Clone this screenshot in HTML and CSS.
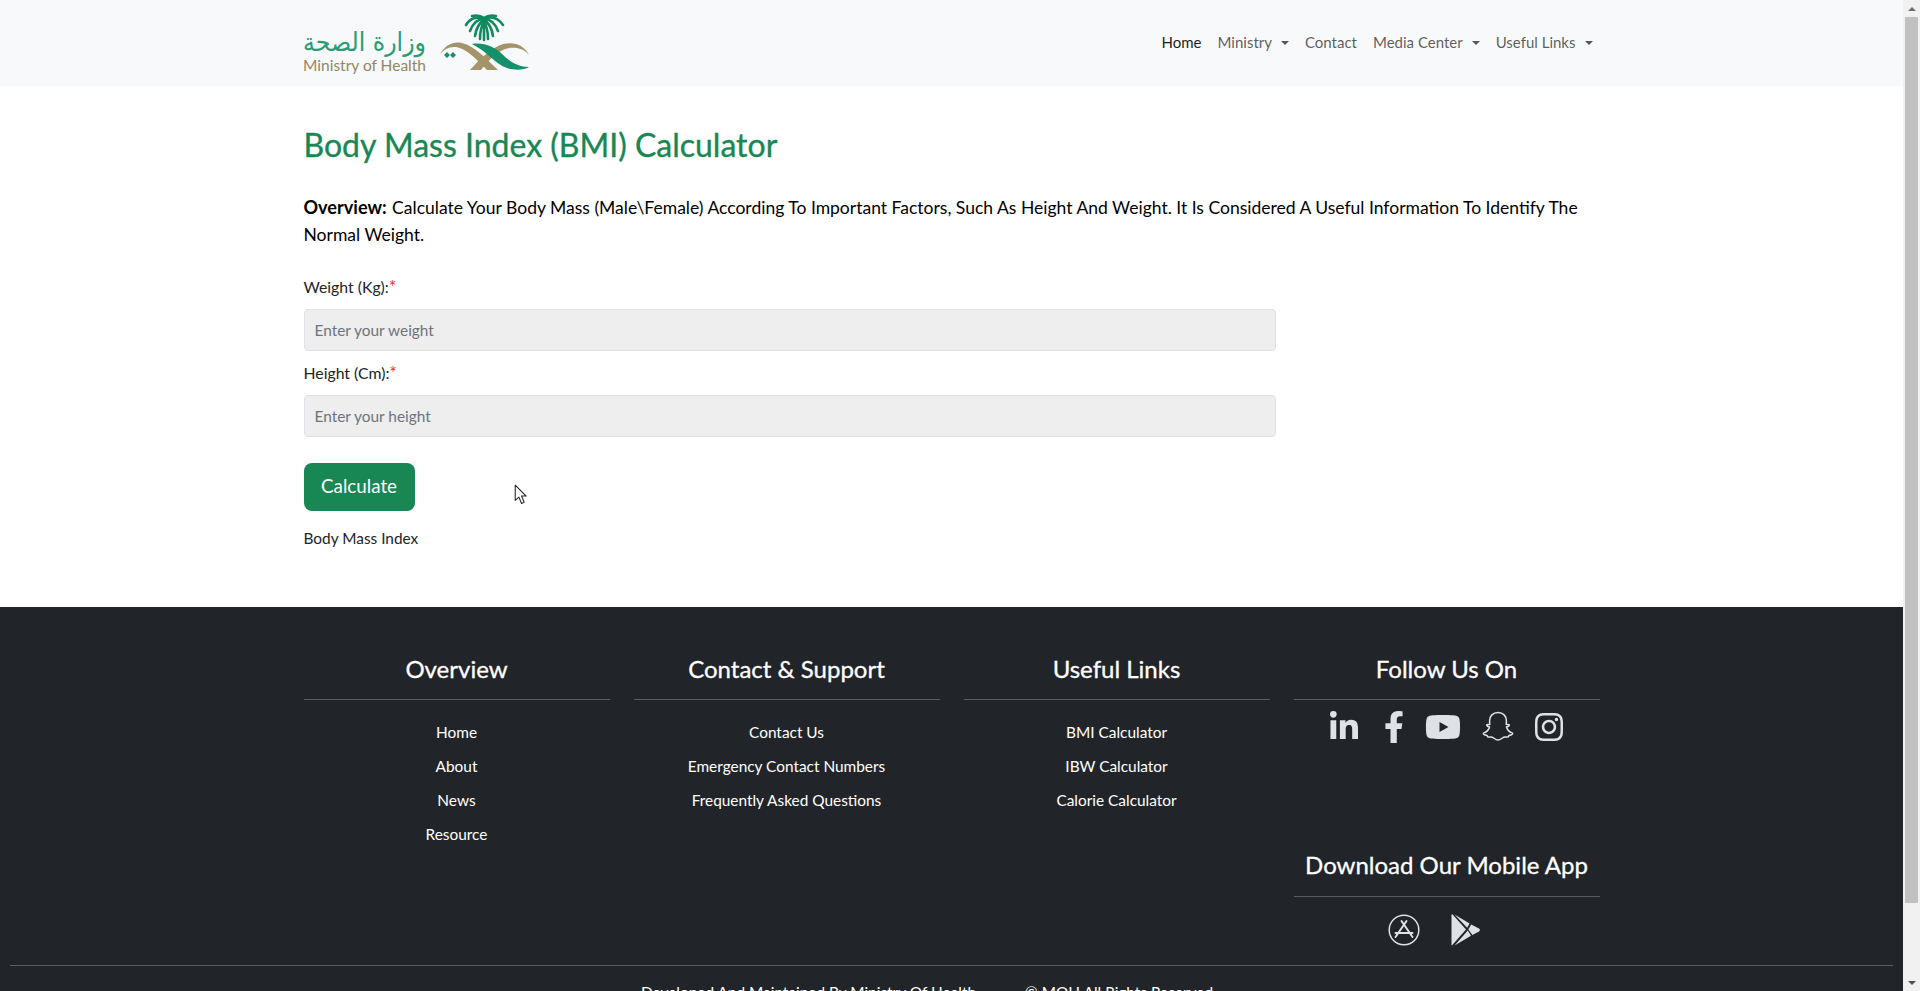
FILE: index.html
```html
<!DOCTYPE html>
<html lang="en">
<head>
<meta charset="utf-8">
<title>Body Mass Index (BMI) Calculator</title>
<link rel="stylesheet" href="styles.css">
</head>
<body>
<div class="shell">
  <div class="page">
    <nav class="navbar">
      <div class="container nav-inner">
        <a class="logo" href="#">
          <svg class="logo-svg" viewBox="300 10 232 64" width="232" height="64">
            <text class="logo-ar" x="426" y="50" text-anchor="end" textLength="123" lengthAdjust="spacingAndGlyphs">وزارة الصحة</text>
            <text class="logo-en" x="303" y="69.5" textLength="123" lengthAdjust="spacingAndGlyphs">Ministry of Health</text>
            <g class="palm">
              <path d="M484 18C477 15 470 17 466 24"/><path d="M484 18C478 18 473 22 470 30"/><path d="M484 19C480 21 476 27 475 35"/><path d="M484 20C482 24 480 30 480 38"/><path d="M484 20V39"/><path d="M484 20C486 24 488 30 488 38"/><path d="M484 19C488 21 492 27 493 35"/><path d="M484 18C490 18 495 22 498 30"/><path d="M484 18C491 15 498 17 503 24"/><path d="M484 17C480 14 476 14 472 15"/><path d="M484 17C488 14 492 14 496 15"/>
            </g>
            <path class="tan" d="M440 54C444 44 454 40 462 42C475 45 486 58 498 69H487C478 60 468 49 458 46.5C450 45 444 48 440 54Z"/>
            <path class="tan" d="M470 69C480 58 491 47 503 43C515 40 525 45 529 54C524 48 516 45.5 507 47.5C497 50 488 60 481 69Z"/>
            <path class="grn" d="M472 43C484 41 494 46 501 52C509 60 517 66 529 66C524 69 515 70 507 67C495 63 488 51 472 43Z"/>
            <path class="grn" d="M447 51l3 3-3 3-3-3zM453 51l3 3-3 3-3-3z"/>
          </svg>
        </a>
        <ul class="nav-list">
          <li class="nav-item nav-active">Home</li>
          <li class="nav-item nav-drop">Ministry</li>
          <li class="nav-item">Contact</li>
          <li class="nav-item nav-drop">Media Center</li>
          <li class="nav-item nav-drop">Useful Links</li>
        </ul>
      </div>
    </nav>

    <main class="container main">
      <h1 class="title">Body Mass Index (BMI) Calculator</h1>
      <p class="overview"><strong class="overview-lead">Overview:</strong> Calculate Your Body Mass (Male\Female) According To Important Factors, Such As Height And Weight. It Is Considered A Useful Information To Identify The Normal Weight.</p>
      <form class="form">
        <label class="label">Weight (Kg):<span class="req">*</span></label>
        <input class="input" type="text" placeholder="Enter your weight">
        <label class="label">Height (Cm):<span class="req">*</span></label>
        <input class="input" type="text" placeholder="Enter your height">
        <button class="btn" type="button">Calculate</button>
      </form>
      <p class="result">Body Mass Index</p>
    </main>

    <footer class="footer">
      <div class="container foot-grid">
        <section class="col">
          <h3 class="col-title">Overview</h3>
          <ul class="links"><li>Home</li><li>About</li><li>News</li><li>Resource</li></ul>
        </section>
        <section class="col">
          <h3 class="col-title">Contact &amp; Support</h3>
          <ul class="links"><li>Contact Us</li><li>Emergency Contact Numbers</li><li>Frequently Asked Questions</li></ul>
        </section>
        <section class="col">
          <h3 class="col-title">Useful Links</h3>
          <ul class="links"><li>BMI Calculator</li><li>IBW Calculator</li><li>Calorie Calculator</li></ul>
        </section>
        <section class="col">
          <h3 class="col-title">Follow Us On</h3>
          <div class="social">
            <svg class="ic ic-in" viewBox="0 0 448 512"><path d="M100.28 448H7.4V148.9h92.88zM53.79 108.1C24.09 108.1 0 83.5 0 53.8a53.79 53.79 0 0 1 107.58 0c0 29.7-24.1 54.3-53.79 54.3zM447.9 448h-92.68V302.4c0-34.7-.7-79.2-48.29-79.2-48.29 0-55.69 37.7-55.69 76.7V448h-92.78V148.9h89.08v40.8h1.3c12.4-23.5 42.69-48.3 87.88-48.3 94 0 111.28 61.9 111.28 142.3V448z"/></svg>
            <svg class="ic ic-fb" viewBox="0 0 320 512"><path d="M279.14 288l14.22-92.66h-88.91v-60.13c0-25.35 12.42-50.06 52.24-50.06h40.42V6.26S260.43 0 225.36 0c-73.22 0-121.08 44.38-121.08 124.72v70.62H22.89V288h81.39v224h100.17V288z"/></svg>
            <svg class="ic ic-yt" viewBox="0 0 576 512"><path d="M549.655 124.083c-6.281-23.65-24.787-42.276-48.284-48.597C458.781 64 288 64 288 64S117.22 64 74.629 75.486c-23.497 6.322-42.003 24.947-48.284 48.597-11.412 42.867-11.412 132.305-11.412 132.305s0 89.438 11.412 132.305c6.281 23.65 24.787 41.5 48.284 47.821C117.22 448 288 448 288 448s170.78 0 213.371-11.486c23.497-6.321 42.003-24.171 48.284-47.821 11.412-42.867 11.412-132.305 11.412-132.305s0-89.438-11.412-132.305zm-317.51 213.508V175.185l142.739 81.205-142.739 81.201z"/></svg>
            <svg class="ic ic-sc" viewBox="0 0 32 32"><path class="ln" d="M16 1.5c-5.2 0-8.4 3.6-8.4 8.2 0 1.4.1 2.7.2 3.6-.9.5-2.4-.3-3 .4-.5.7.4 1.5 2.7 2.3-.6 2.5-2.9 5-5.7 5.9-.7.2-.6 1 .1 1.5.9.6 2.3.9 3.2 1.1.3.9.3 1.6 1.1 1.6 1.3 0 2.6-.5 4.1.1 1.6.7 3.3 2.8 5.7 2.8s4.1-2.1 5.7-2.8c1.5-.6 2.8-.1 4.1-.1.8 0 .8-.7 1.1-1.6.9-.2 2.3-.5 3.2-1.1.7-.5.8-1.3.1-1.5-2.8-.9-5.1-3.4-5.7-5.9 2.3-.8 3.2-1.6 2.7-2.3-.6-.7-2.1.1-3-.4.1-.9.2-2.2.2-3.6 0-4.6-3.2-8.2-8.4-8.2z"/></svg>
            <svg class="ic ic-ig" viewBox="0 0 448 512"><path d="M224.1 141c-63.6 0-114.9 51.3-114.9 114.9s51.3 114.9 114.9 114.9S339 319.5 339 255.9 287.7 141 224.1 141zm0 189.6c-41.1 0-74.7-33.5-74.7-74.7s33.5-74.7 74.7-74.7 74.7 33.5 74.7 74.7-33.6 74.7-74.7 74.7zm146.4-194.3c0 14.9-12 26.8-26.8 26.8-14.9 0-26.8-12-26.8-26.8s12-26.8 26.8-26.8 26.8 12 26.8 26.8zm76.1 27.2c-1.7-35.9-9.9-67.7-36.2-93.9-26.2-26.2-58-34.4-93.9-36.2-37-2.1-147.9-2.1-184.9 0-35.8 1.7-67.6 9.9-93.9 36.1s-34.4 58-36.2 93.9c-2.1 37-2.1 147.9 0 184.9 1.7 35.9 9.9 67.7 36.2 93.9s58 34.4 93.9 36.2c37 2.1 147.9 2.1 184.9 0 35.9-1.7 67.7-9.9 93.9-36.2 26.2-26.2 34.4-58 36.2-93.9 2.1-37 2.1-147.8 0-184.8zM398.8 388c-7.8 19.6-22.9 34.7-42.6 42.6-29.5 11.7-99.5 9-132.1 9s-102.7 2.6-132.1-9c-19.6-7.8-34.7-22.9-42.6-42.6-11.7-29.5-9-99.5-9-132.1s-2.6-102.7 9-132.1c7.8-19.6 22.9-34.7 42.6-42.6 29.5-11.7 99.5-9 132.1-9s102.7-2.6 132.1 9c19.6 7.8 34.7 22.9 42.6 42.6 11.7 29.5 9 99.5 9 132.1s2.7 102.7-9 132.1z"/></svg>
          </div>
          <h3 class="col-title col-title-app">Download Our Mobile App</h3>
          <div class="apps">
            <svg class="ic ic-as" viewBox="0 0 32 32"><circle class="ln" cx="16" cy="16" r="14.8"/><path class="ln ln-b" d="M13.5 7L24.5 23M18.5 7L7.5 23M7.5 19H24.5"/></svg>
            <svg class="ic ic-gp" viewBox="0 0 30 32"><path d="M.5 1.2C.5.2 1 0 1.6.5L15 15.4.9 31.5c-.3-.1-.4-.5-.4-1z"/><path d="M3.5 0.4L18.6 9.6 16.2 13.8z"/><path d="M16.8 16.6L20 21.8 3.6 31.6z"/><path d="M20.2 10.6l7.8 4c1.2.7 1.2 2.2 0 2.9l-6.6 3.4-4.1-5.4z"/></svg>
          </div>
        </section>
      </div>
      <hr class="foot-rule">
      <p class="copy"><span>Developed And Maintained By Ministry Of Health</span><span class="copy-right">© MOH All Rights Reserved</span></p>
    </footer>
  </div>

  <div class="scrollbar">
    <span class="sb-arrow sb-up"></span>
    <span class="sb-track"><span class="sb-thumb"></span></span>
    <span class="sb-arrow sb-down"></span>
  </div>
</div>

<svg class="cursor" viewBox="0 0 13 20" width="14" height="21"><path d="M1 1V15.5L4.5 12.5L7 18.5L9.5 17.5L7 11.5H11.5Z"/></svg>
</body>
</html>
```
FILE: styles.css
```css
* { box-sizing: border-box; }
html, body { margin: 0; height: 100%; }
body {
  font-family: "Lato", "Noto Sans", sans-serif;
  font-size: 15.4px;
  line-height: 1.5;
  color: #212529;
  background: #fff;
  overflow: hidden;
  position: relative;
}
.shell { display: flex; height: 100vh; overflow: hidden; }
.page { flex: 1; min-width: 0; overflow: hidden; }
.container { width: 1320px; margin: 0 auto; padding: 0 12px; }

/* nav */
.navbar { height: 86px; background: #f8f9fa; }
.nav-inner { display: flex; align-items: center; justify-content: space-between; height: 86px; }
.logo { display: block; height: 64px; margin-left: -4px; }
.logo-svg { display: block; }
.logo-ar { font-family: "DejaVu Sans", sans-serif; font-size: 26px; fill: #2a9d74; }
.logo-en { font-family: "Lato", sans-serif; font-size: 14.5px; fill: #93875f; }
.palm path { fill: none; stroke: #0f8a5f; stroke-width: 2.6; stroke-linecap: round; }
.tan { fill: #a3946a; }
.grn { fill: #14906a; }
.nav-list { display: flex; list-style: none; margin: 0 7px 2px 0; padding: 0; gap: 16px; }
.nav-item { color: rgba(0,0,0,.65); font-size: 15px; line-height: 24px; }
.nav-active { color: rgba(0,0,0,.9); }
.nav-drop::after {
  content: "";
  display: inline-block;
  margin-left: 9px;
  vertical-align: 3px;
  border-top: 4.8px solid;
  border-left: 4.8px solid transparent;
  border-right: 4.8px solid transparent;
}

/* main */
.main { padding-top: 40px; padding-bottom: 56.6px; }
.title { margin: 0 0 30px; font-size: 32px; line-height: 38.4px; font-weight: 400; color: #198754; -webkit-text-stroke: .35px #198754; }
.overview { margin: 0 0 27px; font-size: 17.52px; line-height: 27px; color: #000; }
.overview-lead { font-size: 18.1px; font-weight: 700; margin-right: 1px; }
.form { display: flex; flex-direction: column; align-items: flex-start; }
.label { font-size: 15.8px; line-height: 24px; margin-bottom: 10px; color: #212529; }
.req { color: #dc3545; font-size: 18px; line-height: 1; }
.input {
  display: block;
  width: 972px;
  height: 42px;
  margin-bottom: 10px;
  padding: 0 10px;
  border: 1px solid #dee2e6;
  border-radius: 4px;
  background: #eee;
  font: inherit;
  color: #212529;
}
.input::placeholder { color: #6c757d; opacity: 1; }
.btn {
  margin-top: 16px;
  width: 111px;
  height: 48px;
  border: 0;
  border-radius: 8px;
  padding: 0 0 2px;
  background: #198754;
  color: #fff;
  font: inherit;
  font-size: 18.8px;
}
.result { margin: 15px 0 0; line-height: 24px; color: #212529; }

/* footer */
.footer { background: #212529; color: #fff; height: 400px; padding-top: 47px; }
.foot-grid { display: grid; grid-template-columns: repeat(4, 306px); column-gap: 24px; }
.col { text-align: center; min-width: 0; }
.col-title {
  margin: 0;
  padding-bottom: 16px;
  border-bottom: 1px solid #5b5e61;
  font-size: 24px;
  line-height: 29px;
  font-weight: 400;
  color: #fff;
  -webkit-text-stroke: .3px #fff;
}
.links { list-style: none; margin: 20px 0 0; padding: 0; display: flex; flex-direction: column; gap: 10px; line-height: 24px; }
.social { display: flex; align-items: flex-start; margin-top: 11px; height: 32px; padding-left: 36px; }
.ic { display: block; height: 32px; fill: #dee2e6; flex: none; }
.ic-in { width: 28px; }
.ic-fb { width: 20px; margin-left: 26px; }
.ic-yt { width: 36px; margin-left: 21px; }
.ic-sc { width: 32px; margin-left: 21px; }
.ic-ig { width: 28px; margin-left: 21px; }
.ln { fill: none; stroke: #dee2e6; stroke-width: 1.5; stroke-linejoin: round; stroke-linecap: round; }
.ln-b { stroke-width: 2; }
.col-title-app { margin-top: 107px; padding-bottom: 17px; }
.apps { display: flex; margin-top: 17px; padding-left: 94px; }
.ic-as { width: 32px; }
.ic-gp { width: 30px; margin-left: 31px; }
.foot-rule { margin: 19px 10px 0; border: 0; border-top: 1px solid #5b5e61; }
.copy { margin: 14px 0 0; padding-right: 49px; text-align: center; line-height: 24px; }
.copy-right { margin-left: 49px; }

/* scrollbar */
.scrollbar { width: 17px; flex: none; display: flex; flex-direction: column; background: #f1f1f1; }
.sb-arrow { height: 17px; flex: none; display: flex; align-items: center; justify-content: center; }
.sb-arrow::before { content: ""; border-left: 4px solid transparent; border-right: 4px solid transparent; }
.sb-up::before { border-bottom: 4px solid #6e6e6e; }
.sb-down::before { border-top: 4px solid #505050; }
.sb-track { flex: 1; padding: 0 2px; }
.sb-thumb { display: block; height: 886px; background: #c1c1c1; }

/* pointer overlay */
.cursor { position: absolute; left: 514px; top: 484px; }
.cursor path { fill: #fff; stroke: #222; stroke-width: 1; stroke-linejoin: round; }
```
